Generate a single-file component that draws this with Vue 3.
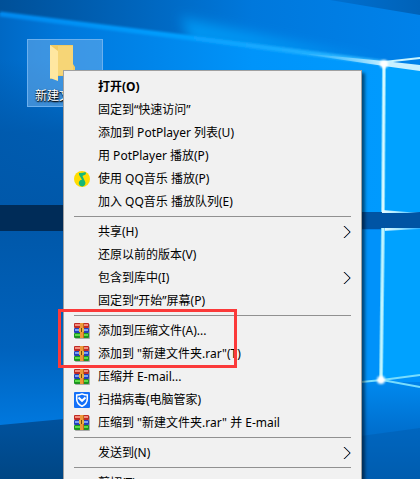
<script setup>
const groups = [
  [
    { text: '打开(O)', bold: true },
    { text: '固定到“快速访问”' },
    { text: '添加到 PotPlayer 列表(U)' },
    { text: '用 PotPlayer 播放(P)' },
    { text: '使用 QQ音乐 播放(P)', icon: 'music' },
    { text: '加入 QQ音乐 播放队列(E)' }
  ],
  [
    { text: '共享(H)', sub: true },
    { text: '还原以前的版本(V)' },
    { text: '包含到库中(I)', sub: true },
    { text: '固定到“开始”屏幕(P)' }
  ],
  [
    { text: '添加到压缩文件(A)...', icon: 'rar' },
    { text: '添加到 "新建文件夹.rar"(T)', icon: 'rar' },
    { text: '压缩并 E-mail...', icon: 'rar' },
    { text: '扫描病毒(电脑管家)', icon: 'shield' },
    { text: '压缩到 "新建文件夹.rar" 并 E-mail', icon: 'rar' }
  ],
  [{ text: '发送到(N)', sub: true }],
  [{ text: '剪切(T)' }]
]
</script>

<template>
  <main class="desktop">
    <svg class="wallpaper" viewBox="0 0 420 479" preserveAspectRatio="none" aria-hidden="true">
      <defs>
        <linearGradient id="sky" x1="0" y1="0" x2="1" y2="0">
          <stop offset="0" stop-color="#005098" />
          <stop offset="0.25" stop-color="#0060b4" />
          <stop offset="0.6" stop-color="#0078dc" />
          <stop offset="1" stop-color="#0082ea" />
        </linearGradient>
        <linearGradient id="corner" x1="0" y1="0" x2="1" y2="0">
          <stop offset="0" stop-color="#0070d0" />
          <stop offset="1" stop-color="#0062b8" />
        </linearGradient>
        <linearGradient id="haze" gradientUnits="userSpaceOnUse" x1="300" y1="10" x2="290" y2="55">
          <stop offset="0" stop-color="#00a4ff" stop-opacity="0" />
          <stop offset="1" stop-color="#00a4ff" stop-opacity=".8" />
        </linearGradient>
        <linearGradient id="under" x1="0" y1="0" x2="1" y2="0">
          <stop offset="0" stop-color="#0068c4" />
          <stop offset="0.15" stop-color="#0078dc" />
          <stop offset="0.6" stop-color="#0094fa" />
          <stop offset="1" stop-color="#009cff" />
        </linearGradient>
        <linearGradient id="shade" x1="0" y1="0" x2="0" y2="1">
          <stop offset="0" stop-color="#0058aa" stop-opacity="0" />
          <stop offset="0.5" stop-color="#0058aa" stop-opacity=".85" />
          <stop offset="1" stop-color="#0058aa" />
        </linearGradient>
        <linearGradient id="lower" x1="0" y1="0" x2="0" y2="1">
          <stop offset="0" stop-color="#0058aa" />
          <stop offset="0.6" stop-color="#0062bc" />
          <stop offset="1" stop-color="#0078de" />
        </linearGradient>
        <linearGradient id="ground" x1="0" y1="0" x2="0" y2="1">
          <stop offset="0" stop-color="#00529e" />
          <stop offset="1" stop-color="#004684" />
        </linearGradient>
        <linearGradient id="floor" x1="0" y1="0" x2="0" y2="1">
          <stop offset="0" stop-color="#008af0" />
          <stop offset="0.5" stop-color="#0070cf" />
          <stop offset="1" stop-color="#0060b4" />
        </linearGradient>
        <linearGradient id="ray" gradientUnits="userSpaceOnUse" x1="0" y1="0" x2="385" y2="0">
          <stop offset="0" stop-color="#0088ee" />
          <stop offset="0.5" stop-color="#06a0ff" />
          <stop offset="1" stop-color="#30b8ff" />
        </linearGradient>
        <linearGradient id="flare" gradientUnits="userSpaceOnUse" x1="290" y1="0" x2="384" y2="0">
          <stop offset="0" stop-color="#50c4ff" stop-opacity="0" />
          <stop offset="1" stop-color="#c8f0ff" />
        </linearGradient>
        <linearGradient id="edge" gradientUnits="userSpaceOnUse" x1="382" y1="0" x2="420" y2="0">
          <stop offset="0" stop-color="#e8fcff" />
          <stop offset="0.4" stop-color="#a8e8ff" />
          <stop offset="1" stop-color="#30b0ff" />
        </linearGradient>
        <filter id="glow" x="-20%" y="-20%" width="140%" height="140%">
          <feGaussianBlur stdDeviation="1" />
        </filter>
        <filter id="soft" x="-20%" y="-50%" width="140%" height="200%">
          <feGaussianBlur stdDeviation="6" />
        </filter>
      </defs>
      <rect width="420" height="479" fill="url(#sky)" />
      <path d="M330 0 L420 15 V0Z" fill="url(#corner)" />
      <path d="M180 16 L384 62 L190 40Z" fill="url(#haze)" filter="url(#soft)" />
      <path d="M0 13 L200 38 L384 62 L420 68 V212 H0Z" fill="url(#under)" />
      <rect y="60" width="64" height="146" fill="url(#shade)" />
      <path d="M0 14 L200 39 L385 63" fill="none" stroke="url(#ray)" stroke-width="5" filter="url(#glow)" />
      <rect y="205" width="64" height="27" fill="#002c58" />
      <rect y="231" width="64" height="194" fill="url(#lower)" />
      <path d="M0 425 L64 419 V479 H0Z" fill="url(#ground)" />
      <rect x="361" y="230" width="59" height="152" fill="#0092fa" />
      <path d="M361 380 H382 L420 386 V479 H361Z" fill="url(#floor)" />
      <path d="M361 436 L420 428 V479 H361Z" fill="#0058a8" opacity=".4" />
      <path d="M384 64 L420 68 V213 H382Z M382 229 H420 V376 L381 380Z" fill="#00a2ff" />
      <rect x="361" y="212" width="59" height="17" fill="#0054a4" />
      <path d="M290 52 L384 61 L420 65 V71 L384 66Z" fill="url(#flare)" />
      <path d="M384 62 L420 58" stroke="#c8f4ff" stroke-width="2" />
      <path d="M384 64 L383 212" stroke="#78d8fc" stroke-width="4" />
      <path d="M384 64 L383 212" stroke="#d8f8ff" stroke-width="2" />
      <path d="M382 210 L420 213 H382Z M382 228 H420 V229 L382 231Z" fill="url(#edge)" />
      <path d="M383 228 L381 380" stroke="#78d8fc" stroke-width="4" />
      <path d="M383 228 L381 380" stroke="#c0f4ff" stroke-width="2" />
      <path d="M361 382 L382 380 L420 375 M382 380 L420 387" fill="none" stroke="#78dcfc" stroke-width="2" />
      <circle cx="384" cy="64" r="4" fill="#fff" filter="url(#glow)" />
      <circle cx="381" cy="380" r="4" fill="#fff" filter="url(#glow)" />
    </svg>

    <button class="shortcut" type="button">
      <svg class="folder" viewBox="0 0 26 38" aria-hidden="true">
        <path d="M1 1 H24 V20 L26 23 V32 H9 L1 35Z" fill="#f1cb62" />
        <path d="M9 2 H24 V31 H9Z" fill="#f6d576" />
        <path d="M1 1 L9 7 V37 L1 34Z" fill="#ffe7a0" />
      </svg>
      <span class="shortcut-name">新建文件夹</span>
    </button>

    <nav class="menu">
      <ul v-for="(group, i) in groups" :key="i" class="group">
        <li v-for="item in group" :key="item.text">
          <button class="item" :class="{ bold: item.bold }" type="button">
            <span class="icon">
              <svg v-if="item.icon === 'music'" viewBox="0 0 16 16" aria-hidden="true">
                <circle cx="8" cy="8" r="8" fill="#ffdc00" />
                <path d="M5 2 C7.500 2.200 9.500 1.800 11.500 1 L12 3 C10.500 4 9.500 4.500 8.500 5 L11 10.500 A3.300 3.300 0 1 1 8 8.800 L5 3.800Z" fill="#15b877" />
              </svg>
              <svg v-else-if="item.icon === 'rar'" viewBox="0 0 16 16" aria-hidden="true">
                <rect x="1" y="1" width="15" height="15" rx="1" fill="#8a8a8a" opacity=".7" />
                <rect width="15" height="5" rx="1" fill="#c02a24" />
                <rect x="1" y="1" width="13" height="2" fill="#f48c7c" />
                <rect y="5" width="15" height="5" rx="1" fill="#2440b8" />
                <rect x="1" y="6" width="13" height="2" fill="#7aa0f4" />
                <rect y="10" width="15" height="5" rx="1" fill="#1c9420" />
                <rect x="1" y="11" width="13" height="2" fill="#5cdc48" />
                <rect x="6" width="4" height="15" fill="#c06c1c" />
                <rect x="6" width="3" height="15" fill="#ee9838" />
                <rect x="5" y="5" width="5" height="4" fill="#e8b040" />
                <rect x="7" y="5" width="1" height="4" fill="#7a4408" />
              </svg>
              <svg v-else-if="item.icon === 'shield'" viewBox="0 0 16 16" aria-hidden="true">
                <rect width="16" height="16" rx="1" fill="#1470f8" />
                <path d="M8 1.800 C10 2.800 11.500 3 13.300 3 V7 C13.300 10.500 11 12.800 8 14.200 C5 12.800 2.700 10.500 2.700 7 V3 C4.500 3 6 2.800 8 1.800Z" fill="none" stroke="#fff" stroke-width="1.500" />
                <path d="M4.500 5.500 L8 8.800 L11.500 5.500" fill="none" stroke="#fff" stroke-width="2" />
              </svg>
            </span>
            <span class="label">{{ item.text }}</span>
            <svg v-if="item.sub" class="arrow" viewBox="0 0 8 14" aria-hidden="true">
              <path d="M0.500 1 L6.500 7 L0.500 13" fill="none" stroke="#d8a070" />
              <path d="M1.500 1 L7.500 7 L1.500 13" fill="none" stroke="#3a8ad0" />
              <path d="M1 1 L7 7 L1 13" fill="none" stroke="#2a2a38" />
            </svg>
          </button>
        </li>
      </ul>
    </nav>

    <div class="highlight"></div>
  </main>
</template>

<style>
body {
  margin: 0;
}
</style>

<style scoped>
.desktop {
  position: relative;
  height: 100vh;
  overflow: hidden;
  background: #0078d7;
  font-family: "Noto Sans", "Noto Sans CJK SC", sans-serif;
  font-size: 12px;
}

.wallpaper {
  position: absolute;
  width: 100%;
  height: 100%;
}

.shortcut {
  position: absolute;
  top: 39px;
  left: 27px;
  width: 76px;
  height: 68px;
  padding: 4px 0 0;
  display: flex;
  flex-direction: column;
  align-items: center;
  gap: 5px;
  border: 1px solid #6cb0ee;
  background: rgba(110, 175, 235, 0.55);
  font: inherit;
  color: #fff;
}

.folder {
  width: 26px;
  height: 38px;
  margin-right: 6px;
}

.shortcut-name {
  line-height: 18px;
  text-shadow: 1px 1px 2px #000, 0 1px 1px #000;
  white-space: nowrap;
}

.menu {
  position: absolute;
  top: 70px;
  left: 63px;
  width: 297px;
  padding: 4px 0;
  border: 1px solid #a0a0a0;
  background: #f1f1f1;
  box-shadow: 3px 3px 3px rgba(0, 0, 0, 0.5);
}

.group {
  margin: 0;
  padding: 0;
  list-style: none;
}

.group + .group::before {
  content: "";
  display: block;
  height: 1px;
  margin: 3px 10px;
  background: #919191;
}

.item {
  display: flex;
  align-items: center;
  width: 100%;
  height: 23px;
  padding: 0 10px;
  border: none;
  background: none;
  font: inherit;
  color: #000;
  text-align: left;
}

.item:hover {
  background: #fff;
}

.item.bold {
  font-weight: 700;
}

.icon {
  width: 16px;
  height: 16px;
  margin-right: 8px;
}

.icon svg {
  display: block;
  width: 16px;
  height: 16px;
}

.label {
  flex: 1;
  line-height: 20px;
  white-space: nowrap;
}

.arrow {
  width: 8px;
  height: 14px;
}

.highlight {
  position: absolute;
  top: 309px;
  left: 58px;
  width: 173px;
  height: 53px;
  border: 3px solid #fb3a3a;
  pointer-events: none;
}
</style>
